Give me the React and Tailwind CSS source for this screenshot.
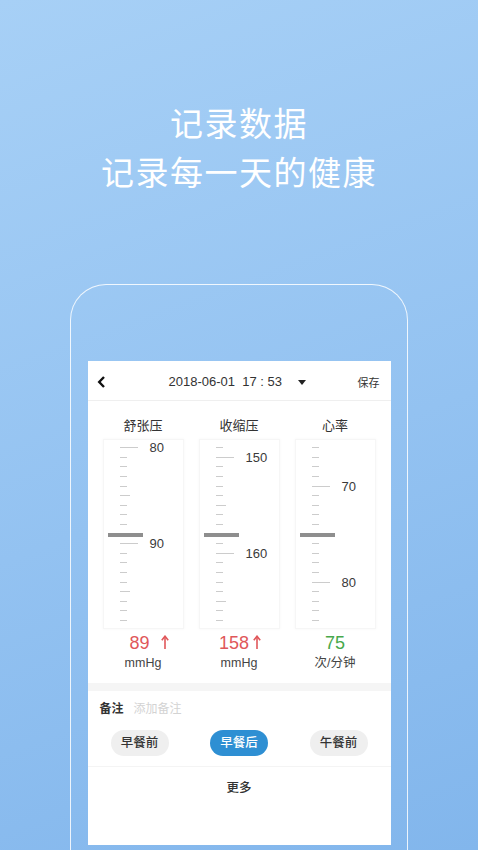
import React from "react";

const Arrow = ({ color }) => (
  <svg width="8" height="15" viewBox="0 0 8 15" className="inline-block">
    <path d="M4 14V2" stroke={color} strokeWidth="1.6" fill="none" />
    <path d="M0.8 5.2L4 1.2L7.2 5.2" stroke={color} strokeWidth="1.6" fill="none" strokeLinejoin="miter" />
  </svg>
);

const Ruler = ({ labels, longs, mediums }) => {
  const rows = Array.from({ length: 19 }, (_, i) => i);
  return (
    <div className="relative h-[190px] border border-[#f6f6f6] shadow-[0_0_3px_rgba(0,0,0,0.04)] pt-[3.5px]">
      {rows.map((i) => {
        const long = longs.includes(i);
        const med = mediums.includes(i);
        return (
          <div key={i} className="flex h-[9.6px] items-center">
            <div className="ml-[16px] flex w-[30px] items-center">
              <div
                className={
                  long
                    ? "h-[1px] w-[18px] bg-[#cccccc]"
                    : med
                    ? "h-[1px] w-[10px] bg-[#cccccc]"
                    : "h-[1px] w-[7px] bg-[#cccccc]"
                }
              />
            </div>
            {labels[i] && (
              <span className="text-[13px] leading-none text-[#3a3a3a]">{labels[i]}</span>
            )}
          </div>
        );
      })}
      <div className="absolute left-[4px] top-[93px] h-[4px] w-[35px] bg-[#8e8e8e]" />
    </div>
  );
};

export default function App() {
  const font = "font-['Liberation_Sans','Noto_Sans_CJK_SC',sans-serif]";
  return (
    <div
      className={`h-[850px] w-[478px] overflow-hidden bg-[linear-gradient(160deg,#a7d0f6_0%,#93c2f1_55%,#82b6ec_100%)] ${font}`}
    >
      <div className="flex flex-col items-center pt-[98px] font-['Noto_Sans_CJK_SC',sans-serif] text-[33px] leading-[49px] tracking-[1.5px] text-white">
        <div>记录数据</div>
        <div>记录每一天的健康</div>
      </div>

      <div className="mx-auto mt-[88px] h-[600px] w-[338px] rounded-t-[36px] border-x-[1.5px] border-t-[1.5px] border-[rgba(255,255,255,0.85)] px-[16.5px] pt-[75.5px]">
        <div className="h-[484px] bg-white">
          {/* header */}
          <div className="flex h-[40px] items-center border-b border-[#efefef] px-[9px] pt-[4px]">
            <svg width="9" height="12" viewBox="0 0 9 12">
              <path d="M7 1L2.2 6L7 11" stroke="#111" strokeWidth="2.4" fill="none" />
            </svg>
            <div className="ml-[63px] whitespace-pre text-[13px] text-[#333]">2018-06-01  17 : 53</div>
            <svg width="8" height="5" viewBox="0 0 8 5" className="ml-[16px]">
              <path d="M0 0H8L4 5Z" fill="#222" />
            </svg>
            <div className="ml-auto mr-[2px] font-['Noto_Sans_CJK_SC',sans-serif] text-[11px] text-[#333]">保存</div>
          </div>

          {/* columns */}
          <div className="grid grid-cols-3 gap-x-[15px] px-[15px] pt-[15px]">
            {[
              {
                t: "舒张压",
                labels: { 0: "80", 10: "90" },
                longs: [0, 10],
                mediums: [5, 15],
                v: "89",
                c: "#e0575a",
                arrow: true,
                gap: "ml-[11px]",
                pad: "pl-[12px]",
                u: "mmHg",
              },
              {
                t: "收缩压",
                labels: { 1: "150", 11: "160" },
                longs: [1, 11],
                mediums: [6, 16],
                v: "158",
                c: "#e0575a",
                arrow: true,
                gap: "ml-[4px]",
                pad: "pl-[2px]",
                u: "mmHg",
              },
              {
                t: "心率",
                labels: { 4: "70", 14: "80" },
                longs: [4, 14],
                mediums: [],
                v: "75",
                c: "#47a84b",
                arrow: false,
                pad: "",
                u: "次/分钟",
              },
            ].map((col) => (
              <div key={col.t} className="flex flex-col">
                <div className="mb-[5px] text-center font-['Noto_Sans_CJK_SC',sans-serif] text-[13px] leading-[18px] text-[#333]">
                  {col.t}
                </div>
                <Ruler labels={col.labels} longs={col.longs} mediums={col.mediums} />
                <div className={`mt-[3px] flex h-[22px] items-center justify-center text-[18px] leading-[22px] ${col.pad}`} style={{ color: col.c }}>
                  <span>{col.v}</span>
                  {col.arrow && (
                    <span className={`${col.gap} flex items-center`}>
                      <Arrow color={col.c} />
                    </span>
                  )}
                </div>
                <div className="mt-[1px] text-center text-[12.5px] leading-[16px] text-[#444]">{col.u}</div>
              </div>
            ))}
          </div>

          {/* band */}
          <div className="mt-[12px] h-[8px] bg-[#f5f5f5]" />

          {/* notes */}
          <div className="flex items-center px-[12px] pt-[8px] font-['Noto_Sans_CJK_SC',sans-serif] text-[12px] leading-[18px]">
            <span className="font-bold text-[#333]">备注</span>
            <span className="ml-[10px] text-[#d3d3d3]">添加备注</span>
          </div>

          <div className="mt-[13px] flex justify-between px-[23px] font-['Noto_Sans_CJK_SC',sans-serif] text-[12.5px]">
            <div className="flex h-[26px] w-[58px] items-center justify-center rounded-full bg-[#efefef] font-medium text-[#333]">早餐前</div>
            <div className="flex h-[26px] w-[58px] items-center justify-center rounded-full bg-[#2e8fd3] font-medium text-white">早餐后</div>
            <div className="flex h-[26px] w-[58px] items-center justify-center rounded-full bg-[#efefef] font-medium text-[#333]">午餐前</div>
          </div>

          <div className="mt-[10px] border-t border-[#f4f4f4]" />
          <div className="pt-[11px] text-center font-['Noto_Sans_CJK_SC',sans-serif] text-[12.5px] font-medium leading-[18px] text-[#333]">
            更多
          </div>
        </div>
      </div>
    </div>
  );
}
